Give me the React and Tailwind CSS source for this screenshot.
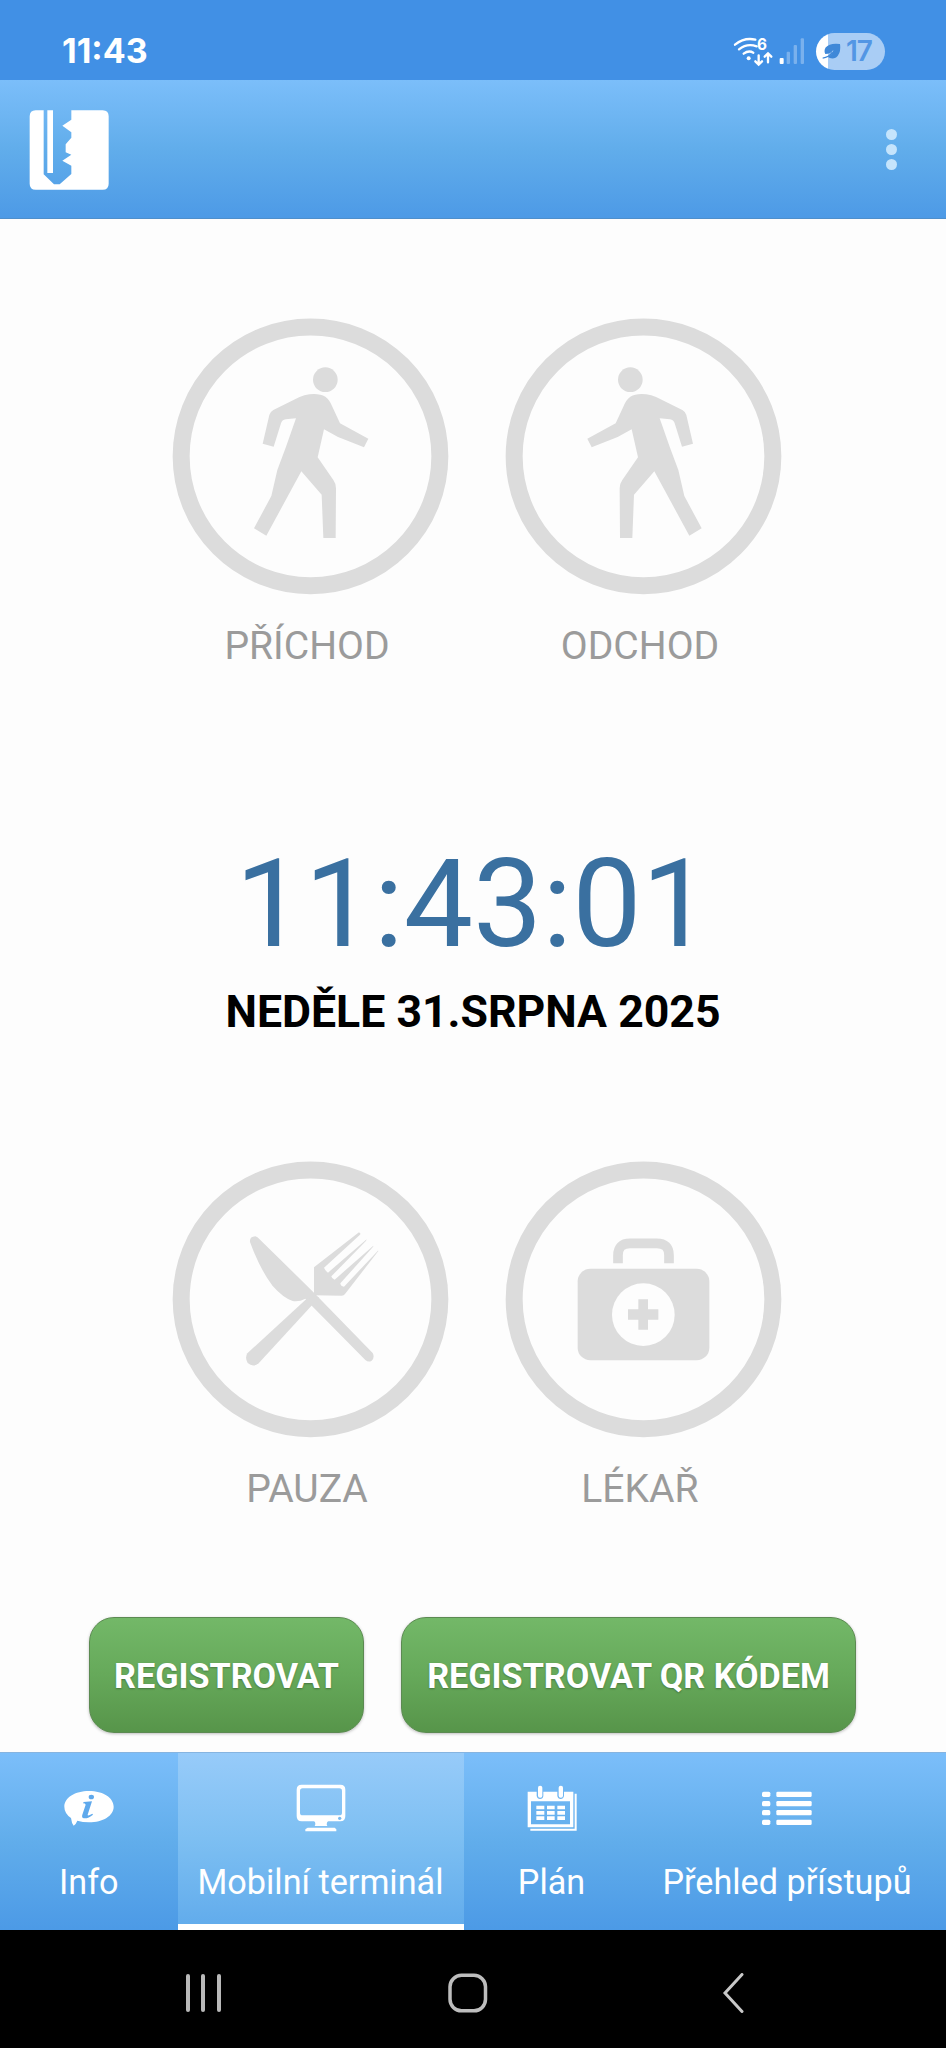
// src/App.jsx
import clsx from "clsx";

function LogoIcon() {
  return (
    <svg viewBox="88 329 240 240" className="w-20 h-20" fill="#fff">
      <path
        fillRule="evenodd"
        d="M108 330H309Q327 330 327 348V550Q327 568 309 568H108Q90 568 90 550V348Q90 330 108 330ZM132 330V522L163 552H180L215 521V496L188 481L215 463L198 456V432L215 412V396L188 376L215 358V330ZM143 330H160V518H143Z"
      />
    </svg>
  );
}

function WifiIcon() {
  return (
    <svg viewBox="96 105 126 99" className="w-[42px] h-[33px]" fill="none" stroke="#fff" strokeWidth="7" strokeLinecap="round">
      <path d="M105 134Q134 111 166 119" />
      <path d="M117 148Q141 129 170 139" />
      <path d="M131 161Q146 150 160 158" />
      <circle cx="146" cy="175" r="6" fill="#fff" stroke="none" />
      <path d="M176 166V193M166 184L176 194L186 184" />
      <path d="M204 187V161M194 170L204 160L214 170" />
      <text x="171" y="150" fill="#fff" stroke="none" fontFamily="Inter, sans-serif" fontWeight="700" fontSize="46">
        6
      </text>
    </svg>
  );
}

function SignalIcon() {
  return (
    <svg viewBox="238 111 78 84" className="w-[26px] h-[28px]" fill="#fff">
      <rect x="240" y="174" width="12" height="18" rx="3" />
      <rect x="261" y="155" width="10" height="37" rx="3" opacity="0.3" />
      <rect x="282" y="135" width="10" height="57" rx="3" opacity="0.3" />
      <rect x="303" y="115" width="10" height="77" rx="3" opacity="0.3" />
    </svg>
  );
}

function LeafIcon() {
  return (
    <svg viewBox="366 130 56 52" className="w-[19px] h-[17px]" fill="#3f88d8">
      <path d="M420 133Q388 129 376 144Q370 153 375 164Q392 164 400 151Q396 168 382 172Q394 181 408 174Q424 162 420 133Z" />
      <path d="M367 176Q386 174 397 158" fill="none" stroke="#3f88d8" strokeWidth="4" />
    </svg>
  );
}

function StatusBar() {
  return (
    <div className="h-20 bg-[#4190e5] flex items-start pl-[62px] pr-[61px] text-white">
      <span className="font-[Inter] font-bold text-[34px] leading-[40px] mt-[31px]">11:43</span>
      <div className="ml-auto flex items-start">
        <div className="mt-[35px]">
          <WifiIcon />
        </div>
        <div className="mt-[37px] ml-[5px]">
          <SignalIcon />
        </div>
        <div className="mt-[33px] ml-[11px] w-[69px] h-[37px] rounded-full overflow-hidden bg-linear-to-r from-white from-[17%] to-[#a9cdf5] to-[17%] flex items-center pl-[6px]">
          <LeafIcon />
          <span className="ml-[5px] font-[Inter] font-semibold text-[28px] leading-[37px] tracking-[-1px] text-[#5396e4]">
            17
          </span>
        </div>
      </div>
    </div>
  );
}

function Header() {
  return (
    <header className="h-[139px] bg-linear-to-b from-[#7bbefa] via-[#61adeb] to-[#4d9ae6] border-b border-[#4f8fcb] flex items-start justify-between pl-[29px] pr-[49px] pt-[30px]">
      <LogoIcon />
      <button className="flex flex-col gap-1 mt-[19px]" aria-label="Menu">
        <span className="w-[11px] h-[11px] rounded-full bg-[#c5e4fc]" />
        <span className="w-[11px] h-[11px] rounded-full bg-[#c5e4fc]" />
        <span className="w-[11px] h-[11px] rounded-full bg-[#c5e4fc]" />
      </button>
    </header>
  );
}

const WALKER =
  "M405 298C435 280 475 277 496 290C506 297 512 308 516 318L540 370L625 416L612 442L534 411L492 388L473 472L520 540Q528 551 528 565L527 714H490L485 584L424 514L319 707L282 685L334 588L352 510L378 440L408 355L377 358Q366 360 363 370L341 440L308 431L328 345Q331 335 340 330Z";

function ArriveIcon() {
  return (
    <>
      <circle cx="496" cy="239" r="37" />
      <path d={WALKER} />
    </>
  );
}

function LeaveIcon() {
  return (
    <g transform="translate(908 0) scale(-1 1)">
      <ArriveIcon />
    </g>
  );
}

function BreakIcon() {
  return (
    <g transform="translate(0 -9)">
      {/* knife */}
      <path d="M270 306Q268 290 286 289Q293 291 298 297L462 458L638 639Q645 652 635 662Q626 668 616 660L453 495L436 476Q418 486 398 483Q370 474 338 438Q300 388 270 306Z" />
      {/* fork */}
      <path d="M440 476L262 640Q254 654 263 669Q279 683 296 670L478 472Z" />
      <path d="M462 466V382L597 277L655 333L555 462Q552 467 545 467Z" />
      <path
        fill="#fdfdfd"
        d="M492 383L600 284L606 274L620 298L504 398Q497 394 492 383ZM514 409L617 304L626 290L640 317L524 419Q515 417 514 409ZM541 430L636 324L648 310L654 332L552 440Q542 440 541 430Z"
      />
    </g>
  );
}

function DoctorIcon() {
  return (
    <g transform="translate(-9 -9)">
      <path d="M384 370V346Q384 310 420 310H500Q537 310 537 346V370" fill="none" stroke="#dcdcdc" strokeWidth="29" />
      <rect x="263" y="386" width="395" height="275" rx="38" />
      <circle cx="460" cy="524" r="94" fill="#fdfdfd" />
      <path d="M445 478H474V508H505V539H474V569H445V539H414V508H445Z" />
    </g>
  );
}

function ActionTile({ label, icon: Icon }) {
  return (
    <button className="w-[277px] flex flex-col items-center">
      <svg viewBox="36 54 831 831" className="w-[277px] h-[277px]" fill="#dcdcdc">
        <circle cx="451.5" cy="469" r="388" fill="none" stroke="#dcdcdc" strokeWidth="51" />
        <Icon />
      </svg>
      <span className="mt-[31px] pr-[7px] text-[39.1px] leading-[40px] text-[#9b9b9b]">{label}</span>
    </button>
  );
}

function GreenButton({ children, className }) {
  return (
    <button
      className={clsx(
        "h-[116px] pt-[2px] rounded-[25px] border border-[#5c8a52] bg-linear-to-b from-[#73b868] via-[#66a95a] to-[#57954a] shadow-[0_1px_3px_rgba(0,0,0,0.25)] text-white font-bold text-[34.2px] leading-[40px] text-shadow-[0_1px_2px_rgba(0,0,0,0.3)] whitespace-nowrap",
        className
      )}
    >
      {children}
    </button>
  );
}

function InfoIcon() {
  return (
    <svg viewBox="191 129 150 150" className="w-[50px] h-[50px]" fill="#fff">
      <path d="M266 153C308 153 340 173 340 200C340 227 308 247 266 247Q247 247 231 242Q228 251 220 257Q214 250 212 234Q192 220 192 200C192 173 224 153 266 153Z" />
      <g fill="#5fa9ec">
        <ellipse cx="273" cy="171" rx="8" ry="7" />
        <path d="M250 186L275 184L262 224Q261 230 276 221L278 224Q264 236 251 235Q243 233 246 224L256 194Q255 190 248 190Z" />
      </g>
    </svg>
  );
}

function TerminalIcon() {
  return (
    <svg viewBox="887 129 150 150" className="w-[50px] h-[50px]" fill="#fff">
      <path
        fillRule="evenodd"
        d="M904 134H1020Q1035 134 1035 149V228Q1035 244 1020 244H984Q980 244 979 253L981 258H943L945 253Q945 244 940 244H904Q889 244 889 228V149Q889 134 904 134ZM907 145Q899 145 899 153V218Q899 226 907 226H1017Q1025 226 1025 218V153Q1025 145 1017 145Z"
      />
      <circle cx="1018" cy="235" r="5" fill="#79bbf1" />
      <path d="M922 263H1003L1008 268V274H915V268Z" />
    </svg>
  );
}

function PlanIcon() {
  return (
    <svg viewBox="200 129 150 150" className="w-[50px] h-[50px]" fill="#fff">
      <path
        fillRule="evenodd"
        d="M202 155H229V168Q231 177 239 177Q248 177 249 168V155H291V168Q293 177 301 177Q309 177 311 168V155H339V262H202ZM212 184V253H329V184Z"
      />
      <rect x="233" y="137" width="13" height="36" rx="6" />
      <rect x="295" y="137" width="13" height="36" rx="6" />
      <path d="M343 161H349V272H210V266H343Z" />
      <path d="M228 197H252V208H228ZM260 197H283V208H260ZM291 197H314V208H291ZM228 213H252V224H228ZM260 213H283V224H260ZM291 213H314V224H291ZM228 229H252V240H228ZM260 229H283V240H260ZM291 229H314V240H291Z" />
    </svg>
  );
}

function ListIcon() {
  return (
    <svg viewBox="905 129 150 150" className="w-[50px] h-[50px]" fill="#fff">
      {[155, 183, 210, 239].map((y) => (
        <g key={y}>
          <rect x="905" y={y} width="25" height="16" rx="5" />
          <rect x="948" y={y} width="106" height="16" rx="4" />
        </g>
      ))}
    </svg>
  );
}

const tabs = [
  { label: "Info", icon: InfoIcon, width: "w-[177.5px]" },
  { label: "Mobilní terminál", icon: TerminalIcon, width: "w-[286px]", active: true },
  { label: "Plán", icon: PlanIcon, width: "w-[176px]" },
  { label: "Přehled přístupů", icon: ListIcon, width: "w-[295px]" },
];

function TabBar() {
  return (
    <nav className="h-[178px] border-t border-[#86b4e0] bg-linear-to-b from-[#7bbefa] via-[#61adeb] to-[#4c9ae6] flex text-white">
      {tabs.map(({ label, icon: Icon, width, active }) => (
        <button
          key={label}
          className={clsx(
            "flex flex-col items-center pt-[30px] whitespace-nowrap",
            width,
            active && "bg-linear-to-b from-[#97cbf9] via-[#7dbff2] to-[#62acec] border-b-[6px] border-white"
          )}
        >
          <Icon />
          <span className="mt-[29px] text-[34.2px] leading-[40px]">{label}</span>
        </button>
      ))}
    </nav>
  );
}

function SystemNav() {
  return (
    <div className="h-[118px] bg-black flex items-start pl-[185.5px] pt-[43px]">
      <div className="flex gap-[11.5px] pt-px">
        <span className="w-1 h-[38px] rounded-full bg-[#b9b9b9]" />
        <span className="w-1 h-[38px] rounded-full bg-[#b9b9b9]" />
        <span className="w-1 h-[38px] rounded-full bg-[#b9b9b9]" />
      </div>
      <svg viewBox="0 0 40 40" className="ml-[227px] w-10 h-10" fill="none" stroke="#bdbdbd" strokeWidth="3.5">
        <rect x="2" y="2.3" width="35.5" height="35.5" rx="11.5" />
      </svg>
      <svg viewBox="0 0 22 40" className="ml-[234px] w-[22px] h-10" fill="none" stroke="#c8c8c8" strokeWidth="3" strokeLinecap="round">
        <path d="M20 1.5L3 20L20 38.5" />
      </svg>
    </div>
  );
}

function App() {
  return (
    <div className="w-[946px] h-[2048px] flex flex-col overflow-hidden bg-[#fdfdfd] font-[Roboto,sans-serif]">
      <StatusBar />
      <Header />

      <main className="flex-1 flex flex-col pt-[99px]">
        <div className="flex gap-14 pl-[172px]">
          <ActionTile label="PŘÍCHOD" icon={ArriveIcon} />
          <ActionTile label="ODCHOD" icon={LeaveIcon} />
        </div>

        <div className="mt-[176px] text-center">
          <p className="text-[123.3px] leading-[124px] text-[#3a70a0]">11:43:01</p>
          <p className="mt-[22px] text-[44.6px] leading-[48px] font-bold text-black">NEDĚLE 31.SRPNA 2025</p>
        </div>

        <div className="mt-[125px] flex gap-14 pl-[172px]">
          <ActionTile label="PAUZA" icon={BreakIcon} />
          <ActionTile label="LÉKAŘ" icon={DoctorIcon} />
        </div>

        <div className="mt-[108px] flex gap-[37px] pl-[89px]">
          <GreenButton className="w-[275px]">REGISTROVAT</GreenButton>
          <GreenButton className="w-[455px]">REGISTROVAT QR KÓDEM</GreenButton>
        </div>
      </main>

      <TabBar />
      <SystemNav />
    </div>
  );
}

export default App;
